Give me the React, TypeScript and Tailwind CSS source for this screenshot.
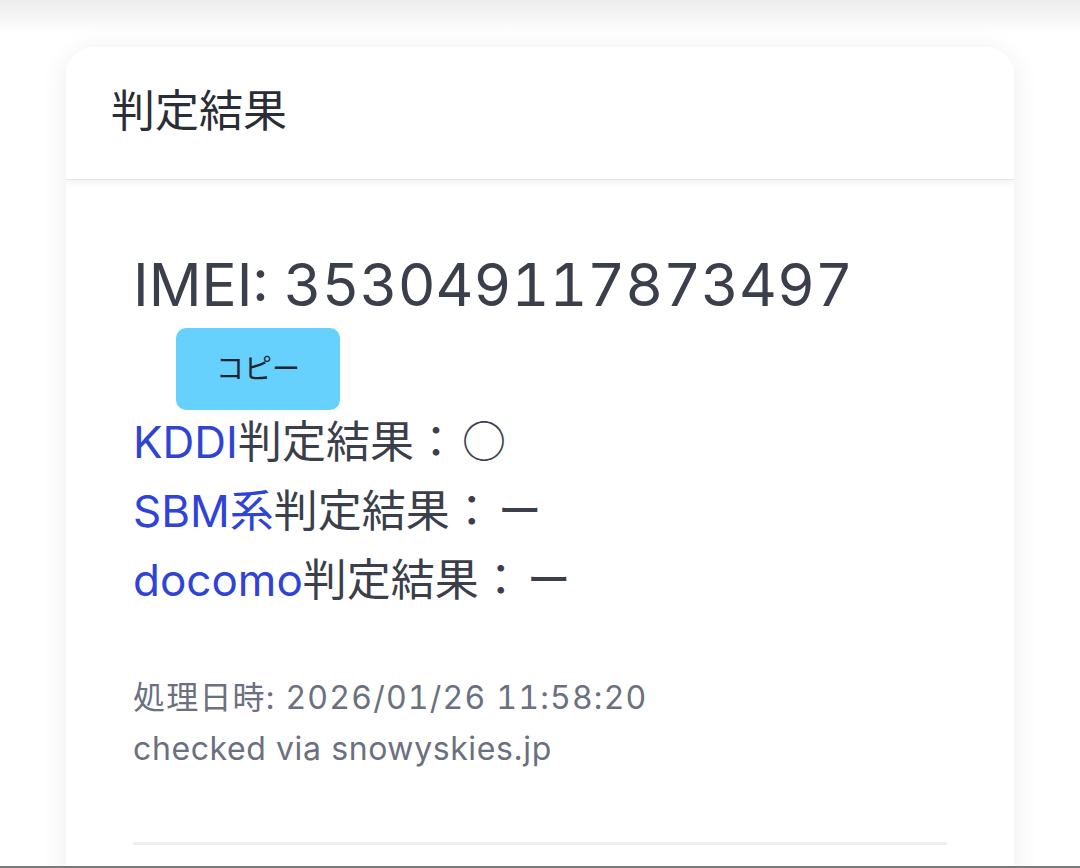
const font = { fontFamily: 'Inter, "Noto Sans CJK JP", sans-serif' };
const cjk = { fontFamily: '"Noto Sans CJK JP", sans-serif' };

function ResultLine({ carrier, value }: { carrier: string; value: string }) {
  return (
    <p className="text-[44px] leading-[66px] text-[#3a3f4b]">
      <span className="text-[#2f43d6]">{carrier}</span>判定結果：
      <span className="ml-[4px]" style={cjk}>{value}</span>
    </p>
  );
}

export default function App() {
  return (
    <div className="h-screen bg-white overflow-hidden" style={font}>
      <div className="h-[34px] bg-gradient-to-b from-[#ededed] to-white" />
      <div className="px-[66px] pt-[13px]">
        <div className="rounded-[28px] bg-white shadow-[0_4px_28px_rgba(0,0,0,0.08)] overflow-hidden">
          {/* header */}
          <div className="h-[133px] flex items-center px-[45px] border-b border-[#e6e6e6] shadow-[0_3px_6px_rgba(0,0,0,0.06)]">
            <h2 className="text-[44px] text-[#2a2d35] pb-[4px]">判定結果</h2>
          </div>
          <div className="px-[67px] pt-[70px] pb-[60px]">
            <p className="text-[58.5px] leading-[70px] text-[#3a3f4b] tabular-nums">IMEI: 353049117873497</p>
            <button className="ml-[43px] mt-[8px] w-[164px] h-[82px] rounded-[10px] bg-[#66d1fc] text-[28px] text-[#1e2430]">
              コピー
            </button>
            <div className="-mt-1">
              <ResultLine carrier="KDDI" value="○" />
              <ResultLine carrier="SBM系" value="ー" />
              <ResultLine carrier="docomo" value="ー" />
            </div>
            <div className="mt-[59px] text-[32px] leading-[51px] text-[#6b7080]">
              <p className="tabular-nums tracking-[1.2px]">処理日時: 2026/01/26 11:58:20</p>
              <p className="tracking-[0.6px]">checked via snowyskies.jp</p>
            </div>
            <div className="mt-[68px] h-[3px] bg-[#f0f0f0]" />
          </div>
        </div>
      </div>
      <div className="fixed bottom-0 left-0 right-0 h-[2px] bg-[#7a7a7a]" />
    </div>
  );
}
